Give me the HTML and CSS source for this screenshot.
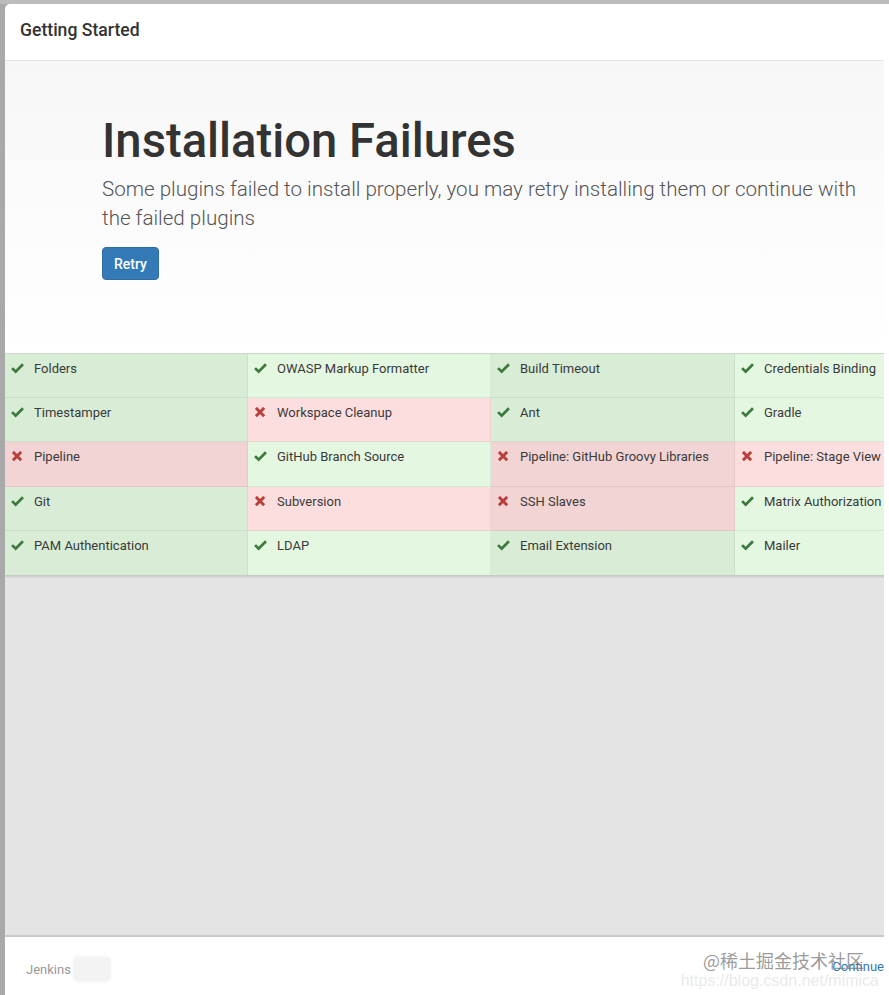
FILE: index.html
```html
<!DOCTYPE html>
<html>
<head>
<meta charset="utf-8">
<link rel="stylesheet" href="styles.css">
</head>
<body>
<div class="page">
  <div class="frame">
    <div class="modal">
      <div class="modal-header">Getting Started</div>
      <div class="jumbo">
        <h1 class="title">Installation Failures</h1>
        <p class="lead">Some plugins failed to install properly, you may retry installing them or continue with<br>the failed plugins</p>
        <button class="btn-retry">Retry</button>
      </div>
      <div class="plugins">
        <div class="cell ok dark"><svg class="ico" viewBox="0 0 14 12"><polygon class="chk" points="0,6.6 2.1,4.5 5,7.3 11.9,0.4 14,2.5 5,11.5"/></svg><span>Folders</span></div>
        <div class="cell ok light"><svg class="ico" viewBox="0 0 14 12"><polygon class="chk" points="0,6.6 2.1,4.5 5,7.3 11.9,0.4 14,2.5 5,11.5"/></svg><span>OWASP Markup Formatter</span></div>
        <div class="cell ok dark"><svg class="ico" viewBox="0 0 14 12"><polygon class="chk" points="0,6.6 2.1,4.5 5,7.3 11.9,0.4 14,2.5 5,11.5"/></svg><span>Build Timeout</span></div>
        <div class="cell ok light"><svg class="ico" viewBox="0 0 14 12"><polygon class="chk" points="0,6.6 2.1,4.5 5,7.3 11.9,0.4 14,2.5 5,11.5"/></svg><span>Credentials Binding</span></div>

        <div class="cell ok dark"><svg class="ico" viewBox="0 0 14 12"><polygon class="chk" points="0,6.6 2.1,4.5 5,7.3 11.9,0.4 14,2.5 5,11.5"/></svg><span>Timestamper</span></div>
        <div class="cell fail light"><svg class="ico" viewBox="0 0 14 12"><path class="x" d="M2 1 L11 10 M11 1 L2 10"/></svg><span>Workspace Cleanup</span></div>
        <div class="cell ok dark"><svg class="ico" viewBox="0 0 14 12"><polygon class="chk" points="0,6.6 2.1,4.5 5,7.3 11.9,0.4 14,2.5 5,11.5"/></svg><span>Ant</span></div>
        <div class="cell ok light"><svg class="ico" viewBox="0 0 14 12"><polygon class="chk" points="0,6.6 2.1,4.5 5,7.3 11.9,0.4 14,2.5 5,11.5"/></svg><span>Gradle</span></div>

        <div class="cell fail dark"><svg class="ico" viewBox="0 0 14 12"><path class="x" d="M2 1 L11 10 M11 1 L2 10"/></svg><span>Pipeline</span></div>
        <div class="cell ok light"><svg class="ico" viewBox="0 0 14 12"><polygon class="chk" points="0,6.6 2.1,4.5 5,7.3 11.9,0.4 14,2.5 5,11.5"/></svg><span>GitHub Branch Source</span></div>
        <div class="cell fail dark"><svg class="ico" viewBox="0 0 14 12"><path class="x" d="M2 1 L11 10 M11 1 L2 10"/></svg><span>Pipeline: GitHub Groovy Libraries</span></div>
        <div class="cell fail light"><svg class="ico" viewBox="0 0 14 12"><path class="x" d="M2 1 L11 10 M11 1 L2 10"/></svg><span>Pipeline: Stage View</span></div>

        <div class="cell ok dark"><svg class="ico" viewBox="0 0 14 12"><polygon class="chk" points="0,6.6 2.1,4.5 5,7.3 11.9,0.4 14,2.5 5,11.5"/></svg><span>Git</span></div>
        <div class="cell fail light"><svg class="ico" viewBox="0 0 14 12"><path class="x" d="M2 1 L11 10 M11 1 L2 10"/></svg><span>Subversion</span></div>
        <div class="cell fail dark"><svg class="ico" viewBox="0 0 14 12"><path class="x" d="M2 1 L11 10 M11 1 L2 10"/></svg><span>SSH Slaves</span></div>
        <div class="cell ok light"><svg class="ico" viewBox="0 0 14 12"><polygon class="chk" points="0,6.6 2.1,4.5 5,7.3 11.9,0.4 14,2.5 5,11.5"/></svg><span>Matrix Authorization Strategy</span></div>

        <div class="cell ok dark"><svg class="ico" viewBox="0 0 14 12"><polygon class="chk" points="0,6.6 2.1,4.5 5,7.3 11.9,0.4 14,2.5 5,11.5"/></svg><span>PAM Authentication</span></div>
        <div class="cell ok light"><svg class="ico" viewBox="0 0 14 12"><polygon class="chk" points="0,6.6 2.1,4.5 5,7.3 11.9,0.4 14,2.5 5,11.5"/></svg><span>LDAP</span></div>
        <div class="cell ok dark"><svg class="ico" viewBox="0 0 14 12"><polygon class="chk" points="0,6.6 2.1,4.5 5,7.3 11.9,0.4 14,2.5 5,11.5"/></svg><span>Email Extension</span></div>
        <div class="cell ok light"><svg class="ico" viewBox="0 0 14 12"><polygon class="chk" points="0,6.6 2.1,4.5 5,7.3 11.9,0.4 14,2.5 5,11.5"/></svg><span>Mailer</span></div>
      </div>
      <div class="filler"></div>
      <div class="modal-footer">
        <div class="brand"><span class="jenkins">Jenkins</span><span class="version"></span></div>
        <a class="continue">Continue</a>
      </div>
    </div>
  </div>
  <div class="watermark">
    <div class="wm-cn">@稀土掘金技术社区</div>
    <div class="wm-url">https://blog.csdn.net/mimica</div>
  </div>
</div>
</body>
</html>
```

FILE: styles.css
```css
html, body {
  margin: 0;
  padding: 0;
  background: #ffffff;
}
body {
  font-family: Roboto, "Liberation Sans", Arial, sans-serif;
  color: #333;
}
.page {
  position: relative;
  width: 889px;
  height: 995px;
  overflow: hidden;
  border-top: 4px solid #bcbcbc;
  box-sizing: border-box;
}
.frame {
  width: 879px;
  height: 991px;
  border-left: 5px solid #a9a9a9;
  overflow: hidden;
  background: #a9a9a9;
}
.modal {
  width: 974px;
  height: 991px;
  display: flex;
  flex-direction: column;
  background: #fff;
  border-top-left-radius: 5px;
  overflow: hidden;
}
.modal-header {
  height: 57px;
  box-sizing: border-box;
  padding: 16px 15px 0 15px;
  font-size: 17.6px;
  line-height: 21px;
  font-weight: 500;
  color: #333;
  border-bottom: 1px solid #e5e5e5;
  flex: none;
}
.jumbo {
  flex: none;
  padding: 55px 0 73px 97px;
  background: linear-gradient(#f7f7f7, #ffffff);
}
.title {
  margin: 0;
  font-size: 47.2px;
  line-height: 50px;
  font-weight: 500;
  color: #333;
}
.lead {
  margin: 9px 0 14px 0;
  font-size: 20.6px;
  line-height: 29px;
  font-weight: 300;
  color: #555;
}
.btn-retry {
  display: block;
  width: 57px;
  height: 33px;
  padding: 0;
  border: 1px solid #2e6da4;
  border-radius: 4px;
  background: #337ab7;
  color: #fff;
  font-family: Roboto, "Liberation Sans", Arial, sans-serif;
  font-size: 14px;
  font-weight: 500;
}
.plugins {
  flex: none;
  display: grid;
  grid-template-columns: 243px 243px 244px 244px;
  border-top: 1px solid #cfd6cd;
  border-bottom: 1px solid #c6cbc5;
  box-shadow: 0 1px 2px rgba(0,0,0,0.12);
  position: relative;
  z-index: 1;
}
.cell {
  height: 44.2px;
  box-sizing: border-box;
  display: flex;
  align-items: flex-start;
  padding: 6px 0 0 6px;
  font-size: 13px;
  line-height: 18px;
  color: #3a3a3a;
  border-bottom: 1px solid rgba(0,0,0,0.06);
  border-right: 1px solid rgba(0,0,0,0.05);
  white-space: nowrap;
  overflow: hidden;
}
.cell:nth-last-child(-n+4) {
  border-bottom: none;
}
.cell.ok.dark { background: #d8ecd6; }
.cell.ok.light { background: #e4f7e1; }
.cell.fail.dark { background: #f2d4d4; }
.cell.fail.light { background: #fddede; }
.ico {
  width: 13px;
  height: 11px;
  margin: 3px 10px 0 0;
  flex: none;
}
.chk { fill: #3b7a3c; }
.x {
  stroke: #b8403c;
  stroke-width: 3.2;
  fill: none;
}
.filler {
  flex: 1 1 auto;
  background: #e4e4e4;
}
.modal-footer {
  flex: none;
  height: 58px;
  border-top: 2px solid #cacaca;
  display: flex;
  align-items: flex-start;
  justify-content: space-between;
  padding: 0 95px 0 21px;
  background: #fff;
}
.brand {
  display: flex;
  align-items: center;
  margin-top: 19px;
}
.jenkins {
  font-size: 13px;
  color: #999;
}
.version {
  display: block;
  width: 38px;
  height: 26px;
  margin-left: 2px;
  border-radius: 5px;
  background: #f3f3f3;
  filter: blur(1px);
}
.continue {
  margin-top: 22px;
  font-size: 13px;
  color: #337ab7;
}
.watermark {
  position: absolute;
  left: 685px;
  top: 946px;
  display: flex;
  flex-direction: column;
  align-items: flex-end;
  width: 179px;
  pointer-events: none;
}
.wm-cn {
  font-family: "Noto Sans CJK SC", sans-serif;
  font-size: 18px;
  line-height: 21px;
  color: rgba(110,110,110,0.7);
  white-space: nowrap;
}
.wm-url {
  font-family: "Liberation Sans", Arial, sans-serif;
  font-size: 16px;
  line-height: 20px;
  color: rgba(215,215,215,0.55);
  white-space: nowrap;
  margin-right: -15px;
}
```
